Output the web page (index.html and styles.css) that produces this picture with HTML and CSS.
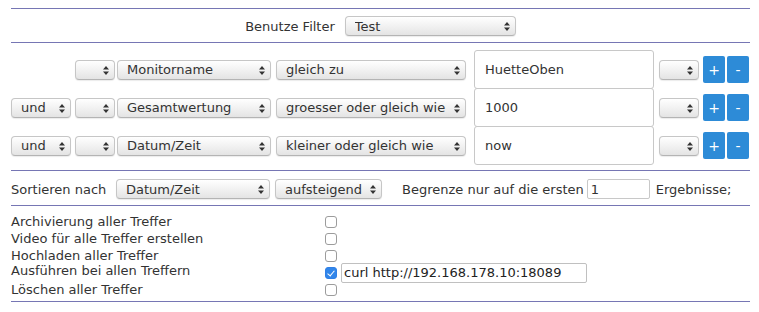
FILE: index.html
```html
<!DOCTYPE html>
<html lang="de">
<head>
  <meta charset="UTF-8">
  <title>Filter</title>
  <link rel="stylesheet" href="styles.css">
</head>
<body>
  <div class="page">
    <div class="rule"></div>

    <div class="filter-row">
      <span class="label">Benutze Filter</span>
      <span class="sel w-filter">
        <select><option>Test</option></select>
        <svg width="6" height="9" viewBox="0 0 6 9"><path d="M3 0L6 3.6H0Z M0 5.4H6L3 9Z"/></svg>
      </span>
    </div>

    <div class="rule"></div>

    <div class="terms">
      <div class="term">
        <span></span>
        <span class="sel w-paren"><select><option></option></select><svg width="6" height="9" viewBox="0 0 6 9"><path d="M3 0L6 3.6H0Z M0 5.4H6L3 9Z"/></svg></span>
        <span class="sel w-attr"><select><option>Monitorname</option></select><svg width="6" height="9" viewBox="0 0 6 9"><path d="M3 0L6 3.6H0Z M0 5.4H6L3 9Z"/></svg></span>
        <span class="sel w-op"><select><option>gleich zu</option></select><svg width="6" height="9" viewBox="0 0 6 9"><path d="M3 0L6 3.6H0Z M0 5.4H6L3 9Z"/></svg></span>
        <input class="val" type="text" value="HuetteOben">
        <span class="sel w-paren"><select><option></option></select><svg width="6" height="9" viewBox="0 0 6 9"><path d="M3 0L6 3.6H0Z M0 5.4H6L3 9Z"/></svg></span>
        <span class="btns"><button class="btn">+</button><button class="btn">-</button></span>
      </div>

      <div class="term">
        <span class="sel w-cnj"><select><option>und</option></select><svg width="6" height="9" viewBox="0 0 6 9"><path d="M3 0L6 3.6H0Z M0 5.4H6L3 9Z"/></svg></span>
        <span class="sel w-paren"><select><option></option></select><svg width="6" height="9" viewBox="0 0 6 9"><path d="M3 0L6 3.6H0Z M0 5.4H6L3 9Z"/></svg></span>
        <span class="sel w-attr"><select><option>Gesamtwertung</option></select><svg width="6" height="9" viewBox="0 0 6 9"><path d="M3 0L6 3.6H0Z M0 5.4H6L3 9Z"/></svg></span>
        <span class="sel w-op"><select><option>groesser oder gleich wie</option></select><svg width="6" height="9" viewBox="0 0 6 9"><path d="M3 0L6 3.6H0Z M0 5.4H6L3 9Z"/></svg></span>
        <input class="val" type="text" value="1000">
        <span class="sel w-paren"><select><option></option></select><svg width="6" height="9" viewBox="0 0 6 9"><path d="M3 0L6 3.6H0Z M0 5.4H6L3 9Z"/></svg></span>
        <span class="btns"><button class="btn">+</button><button class="btn">-</button></span>
      </div>

      <div class="term">
        <span class="sel w-cnj"><select><option>und</option></select><svg width="6" height="9" viewBox="0 0 6 9"><path d="M3 0L6 3.6H0Z M0 5.4H6L3 9Z"/></svg></span>
        <span class="sel w-paren"><select><option></option></select><svg width="6" height="9" viewBox="0 0 6 9"><path d="M3 0L6 3.6H0Z M0 5.4H6L3 9Z"/></svg></span>
        <span class="sel w-attr"><select><option>Datum/Zeit</option></select><svg width="6" height="9" viewBox="0 0 6 9"><path d="M3 0L6 3.6H0Z M0 5.4H6L3 9Z"/></svg></span>
        <span class="sel w-op"><select><option>kleiner oder gleich wie</option></select><svg width="6" height="9" viewBox="0 0 6 9"><path d="M3 0L6 3.6H0Z M0 5.4H6L3 9Z"/></svg></span>
        <input class="val" type="text" value="now">
        <span class="sel w-paren"><select><option></option></select><svg width="6" height="9" viewBox="0 0 6 9"><path d="M3 0L6 3.6H0Z M0 5.4H6L3 9Z"/></svg></span>
        <span class="btns"><button class="btn">+</button><button class="btn">-</button></span>
      </div>
    </div>

    <div class="rule"></div>

    <div class="sort-row">
      <span class="label sort-label">Sortieren nach</span>
      <span class="sel w-attr"><select><option>Datum/Zeit</option></select><svg width="6" height="9" viewBox="0 0 6 9"><path d="M3 0L6 3.6H0Z M0 5.4H6L3 9Z"/></svg></span>
      <span class="sel w-dir"><select><option>aufsteigend</option></select><svg width="6" height="9" viewBox="0 0 6 9"><path d="M3 0L6 3.6H0Z M0 5.4H6L3 9Z"/></svg></span>
      <span class="label limit-label">Begrenze nur auf die ersten</span>
      <input class="limit" type="text" value="1">
      <span class="label">Ergebnisse;</span>
    </div>

    <div class="rule"></div>

    <div class="actions">
      <span class="act-label">Archivierung aller Treffer</span>
      <span class="act-field"><input type="checkbox" class="check"></span>

      <span class="act-label">Video für alle Treffer erstellen</span>
      <span class="act-field"><input type="checkbox" class="check"></span>

      <span class="act-label">Hochladen aller Treffer</span>
      <span class="act-field"><input type="checkbox" class="check"></span>

      <span class="act-label act-tall">Ausführen bei allen Treffern</span>
      <span class="act-field act-tall"><input type="checkbox" class="check" checked><input type="text" class="cmd" value="curl http://192.168.178.10:18089"></span>

      <span class="act-label">Löschen aller Treffer</span>
      <span class="act-field"><input type="checkbox" class="check"></span>
    </div>

    <div class="rule"></div>
  </div>
</body>
</html>
```

FILE: styles.css
```css
body {
  margin: 0;
  font-family: 'DejaVu Sans', Verdana, sans-serif;
  font-size: 13px;
  color: #333;
  background: #fff;
}
.page {
  margin: 8px 9px 0 11px;
}
.rule {
  border-top: 1px solid #7676b4;
}

/* Select boxes */
.sel {
  position: relative;
  display: inline-block;
  height: 20px;
}
.sel select {
  appearance: none;
  -webkit-appearance: none;
  width: 100%;
  height: 20px;
  margin: 0;
  padding: 0 16px 0 9px;
  font-family: inherit;
  font-size: 13px;
  color: #333;
  border: 1px solid #c6c6c6;
  border-bottom-color: #b4b4b4;
  border-radius: 4px;
  background: linear-gradient(#ffffff, #f3f3f3 45%, #e4e4e4);
  box-shadow: 0 1px 1px rgba(0, 0, 0, 0.08);
}
.sel svg {
  position: absolute;
  right: 6px;
  top: 6px;
  fill: #333;
  pointer-events: none;
}
.w-filter { width: 171px; }
.w-paren  { width: 40px; }
.w-cnj    { width: 60px; }
.w-attr   { width: 154px; }
.w-op     { width: 190px; }
.w-dir    { width: 107px; }

/* Filter chooser */
.filter-row {
  display: flex;
  justify-content: center;
  align-items: center;
  gap: 10px;
  padding: 7px 0 6px;
}

/* Terms */
.terms {
  padding: 7px 0 6px;
}
.term {
  display: grid;
  grid-template-columns: 64px 42px 159px 198px 185px 44px 46px;
  align-items: center;
  height: 38px;
}
.val {
  box-sizing: border-box;
  width: 180px;
  height: 39px;
  margin: 0;
  padding: 0 10px;
  font-family: inherit;
  font-size: 13px;
  color: #333;
  border: 1px solid #c8c8c8;
  border-radius: 3px;
  outline: none;
}
.btns {
  display: flex;
  gap: 2px;
}
.btn {
  width: 22px;
  height: 27px;
  padding: 0;
  border: none;
  border-radius: 2px;
  background: #2d8bd7;
  color: #fff;
  font-family: inherit;
  font-size: 14px;
  cursor: pointer;
}

/* Sorting */
.sort-row {
  display: flex;
  align-items: center;
  height: 20px;
  padding: 8px 0 6px;
}
.sort-label {
  width: 105px;
}
.sort-row .w-attr {
  margin-right: 5px;
}
.limit-label {
  margin-left: 20px;
  margin-right: 3px;
}
.limit {
  box-sizing: border-box;
  width: 63px;
  height: 20px;
  margin: 0 6px 0 0;
  padding: 0 3px;
  font-family: inherit;
  font-size: 13px;
  color: #333;
  border: 1px solid #c8c8c8;
  border-radius: 2px;
}

/* Actions */
.actions {
  display: grid;
  grid-template-columns: 314px 1fr;
  grid-auto-rows: 17px;
  align-items: center;
  padding: 7px 0 3px;
}
.actions .act-tall {
  height: 19px;
}
.act-field {
  display: flex;
  align-items: center;
  gap: 4px;
}
.check {
  appearance: none;
  -webkit-appearance: none;
  position: relative;
  box-sizing: border-box;
  width: 12px;
  height: 12px;
  margin: 0;
  border: 1px solid #9c9c9c;
  border-radius: 3px;
  background: #fff;
}
.check:checked {
  border-color: #2f7fe6;
  background: #3186ea;
}
.check:checked::after {
  content: '';
  position: absolute;
  left: 3px;
  top: 1px;
  width: 3px;
  height: 6px;
  border: solid #fff;
  border-width: 0 1.5px 1.5px 0;
  transform: rotate(40deg);
}
.cmd {
  box-sizing: border-box;
  width: 246px;
  height: 20px;
  margin: 0;
  padding: 0 2px;
  font-family: inherit;
  font-size: 13px;
  color: #222;
  border: 1px solid #c0c0c0;
  border-radius: 2px;
}
```
